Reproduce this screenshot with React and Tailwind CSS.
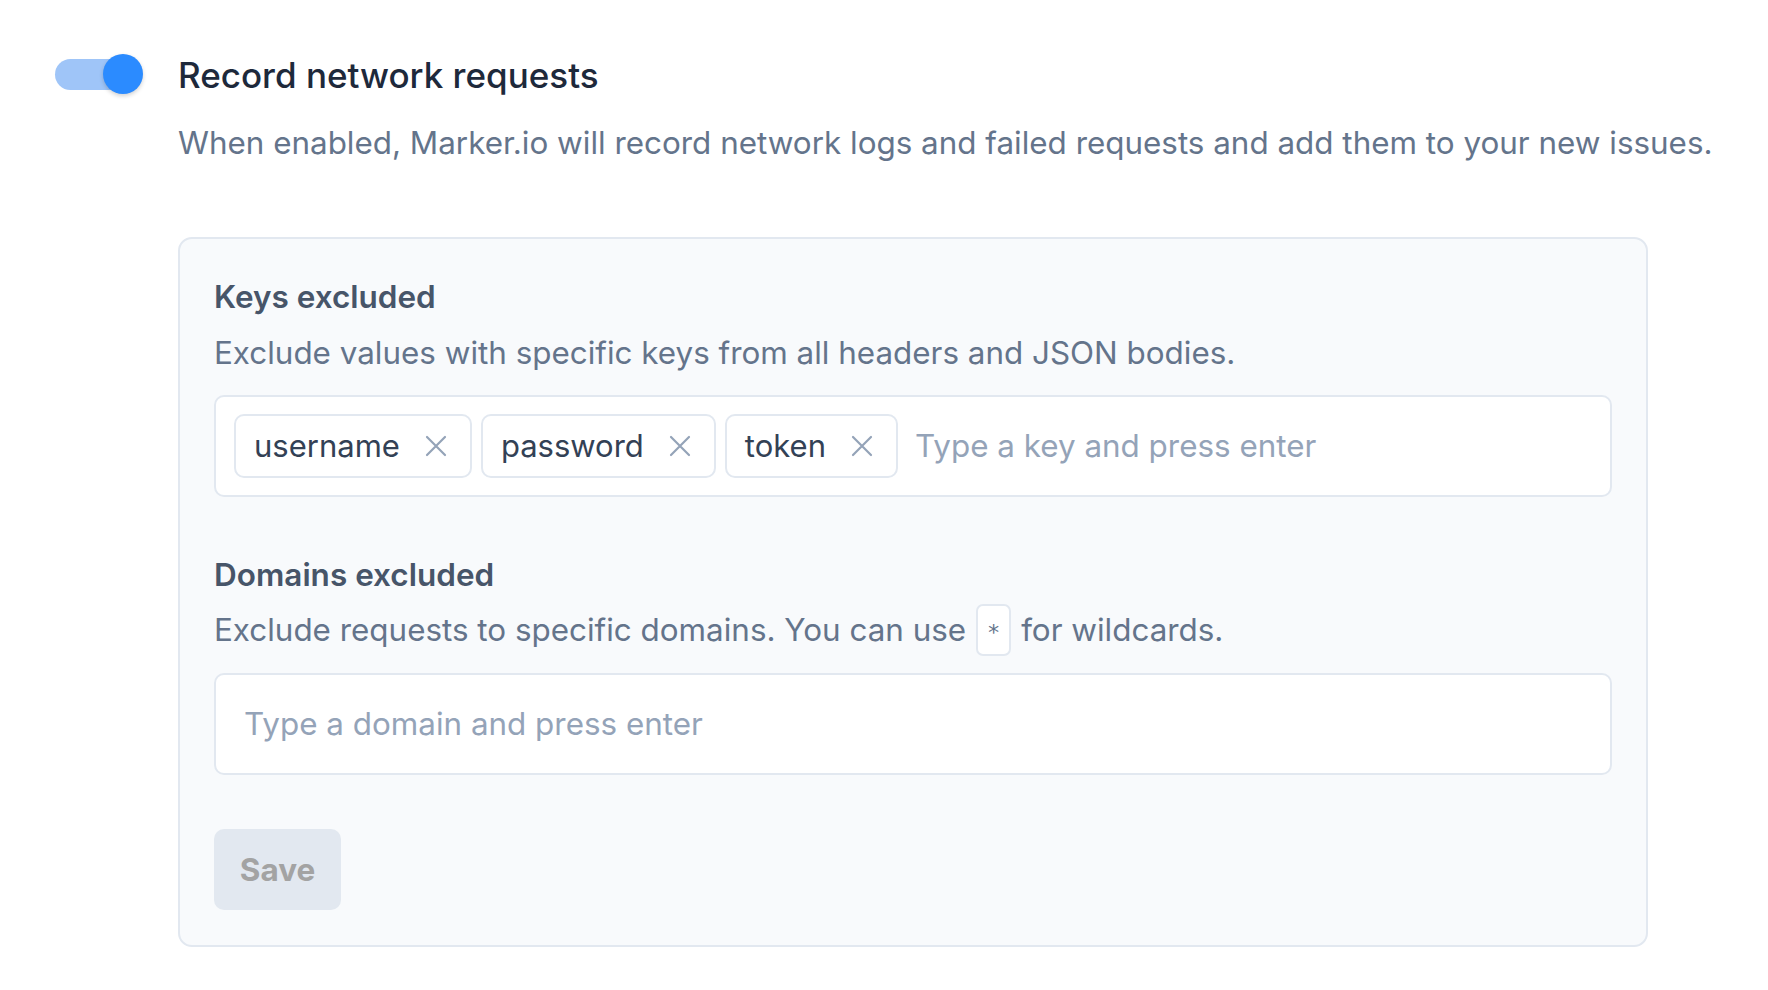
import React from "react";

function XIcon() {
  return (
    <svg width="24" height="24" viewBox="0 0 24 24" fill="none" stroke="#94a3b8" strokeWidth="2.2" strokeLinecap="round">
      <path d="M3 3L21 21M21 3L3 21" />
    </svg>
  );
}

function Chip({ label }) {
  return (
    <div className="flex items-center h-[64px] pl-[18px] pr-[22px] border-2 border-[#e2e8f0] rounded-[10px] bg-white">
      <span className="text-[31px] leading-[40px] text-[#334155]">{label}</span>
      <span className="ml-[24px] flex items-center"><XIcon /></span>
    </div>
  );
}

export default function App() {
  return (
    <div className="min-h-screen bg-white" style={{ fontFamily: "Inter, 'Noto Sans', sans-serif" }}>
      <div className="flex pl-[55px] pt-[53px]">
        <div className="relative w-[88px] h-[40px] mt-[1px] shrink-0">
          <div className="absolute left-0 top-[5px] w-[76px] h-[31px] rounded-full bg-[#9fc5f8]" />
          <div className="absolute left-[48px] top-0 w-[40px] h-[40px] rounded-full bg-[#2b8bff] shadow-[0_2px_4px_rgba(0,0,0,0.18)]" />
        </div>
        <div className="ml-[35px]">
          <h1 className="text-[35px] leading-[44px] font-medium text-[#1e293b]">Record network requests</h1>
          <p className="mt-[24px] text-[31.4px] leading-[44px] text-[#64748b] whitespace-nowrap">
            When enabled, Marker.io will record network logs and failed requests and add them to your new issues.
          </p>
          <div className="mt-[72px] w-[1470px] border-2 border-[#e2e8f0] rounded-[14px] bg-[#f8fafc] px-[34px] pt-[38px] pb-[35px]">
            <h2 className="text-[31.5px] leading-[40px] font-semibold text-[#475569]">Keys excluded</h2>
            <p className="mt-[16px] text-[31.4px] leading-[40px] text-[#64748b]">
              Exclude values with specific keys from all headers and JSON bodies.
            </p>
            <div className="mt-[22px] h-[102px] border-2 border-[#e2e8f0] rounded-[10px] bg-white flex items-center pl-[18px] gap-[9px]">
              <Chip label="username" />
              <Chip label="password" />
              <Chip label="token" />
              <span className="ml-[8px] text-[31.4px] leading-[40px] text-[#94a3b8]">Type a key and press enter</span>
            </div>
            <h2 className="mt-[58px] text-[31.5px] leading-[40px] font-semibold text-[#475569]">Domains excluded</h2>
            <div className="mt-[15px] h-[40px] text-[31.4px] leading-[40px] text-[#64748b] flex items-center whitespace-nowrap">
              <span>Exclude requests to specific domains. You can use</span>
              <span className="mx-[10px] shrink-0 inline-flex items-center justify-center w-[35px] h-[52px] border-2 border-[#e2e8f0] rounded-[7px] bg-white text-[22px] leading-none pt-[6px] text-[#64748b]" style={{ fontFamily: "'DejaVu Sans Mono', monospace" }}>*</span>
              <span>for wildcards.</span>
            </div>
            <div className="mt-[23px] h-[102px] border-2 border-[#e2e8f0] rounded-[10px] bg-white flex items-center pl-[28px]">
              <span className="text-[31.4px] leading-[40px] text-[#94a3b8]">Type a domain and press enter</span>
            </div>
            <button className="mt-[54px] w-[127px] h-[81px] rounded-[10px] bg-[#e2e8f0] text-[31.5px] font-bold text-[#a3a3a3] flex items-center justify-center">
              Save
            </button>
          </div>
        </div>
      </div>
    </div>
  );
}
